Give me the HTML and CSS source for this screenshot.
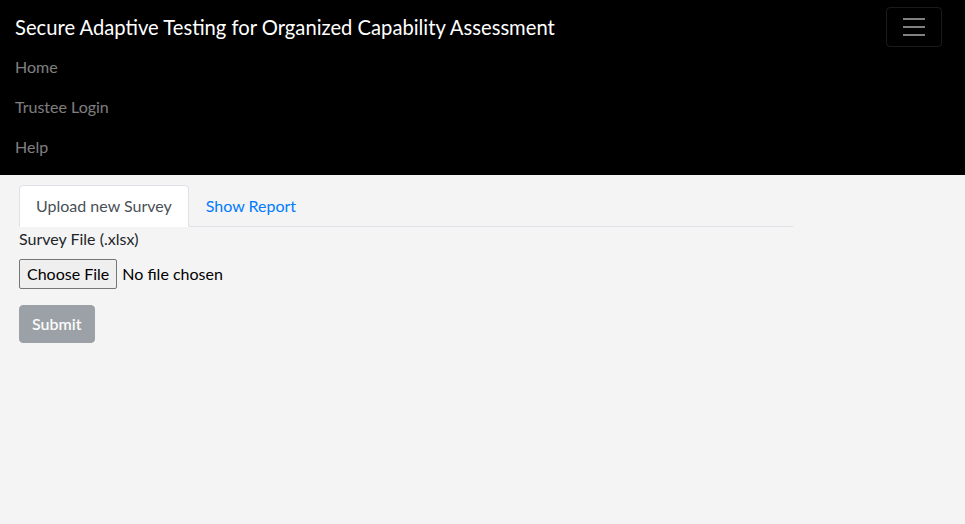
FILE: index.html
```html
<!DOCTYPE html>
<html lang="en">
<head>
<meta charset="utf-8">
<title>SATOCA</title>
<link rel="stylesheet" href="styles.css">
</head>
<body>
<nav class="navbar">
  <div class="navbar-top">
    <a class="brand" href="#">Secure Adaptive Testing for Organized Capability Assessment</a>
    <button class="toggler" type="button" aria-label="Toggle navigation">
      <svg width="30" height="30" viewBox="0 0 30 30"><path stroke="rgba(255,255,255,0.5)" stroke-width="2" stroke-linecap="butt" d="M4 7h22M4 15h22M4 23h22"/></svg>
    </button>
  </div>
  <ul class="nav-links">
    <li><a href="#">Home</a></li>
    <li><a href="#">Trustee Login</a></li>
    <li><a href="#">Help</a></li>
  </ul>
</nav>
<main class="content">
  <ul class="tabs">
    <li><a class="tab active" href="#">Upload new Survey</a></li>
    <li><a class="tab" href="#">Show Report</a></li>
  </ul>
  <form class="upload-form">
    <label class="field-label">Survey File (.xlsx)</label>
    <div class="file-row">
      <span class="file-btn">Choose File</span>
      <span class="file-name">No file chosen</span>
    </div>
    <button class="submit" type="button" disabled>Submit</button>
  </form>
</main>
</body>
</html>
```
FILE: styles.css
```css
* { box-sizing: border-box; }
html, body { margin: 0; padding: 0; }
body {
  background: #f4f4f4;
  font-family: "Lato", "Open Sans", sans-serif;
  font-size: 16px;
  line-height: 24px;
  color: #212529;
  height: 524px;
}
a { text-decoration: none; }
.navbar {
  background: #000;
  padding: 7px 23px 8px 15px;
}
.navbar-top {
  display: flex;
  justify-content: space-between;
  align-items: center;
}
.brand {
  color: #fff;
  font-size: 20.2px;
  line-height: 30px;
  padding: 5px 0;
}
.toggler {
  width: 56px;
  height: 40px;
  background: transparent;
  border: 1px solid rgba(255,255,255,0.1);
  border-radius: 4px;
  display: flex;
  align-items: center;
  justify-content: center;
  padding: 0;
}
.nav-links {
  list-style: none;
  margin: 0;
  padding: 0;
}
.nav-links a {
  display: block;
  color: rgba(255,255,255,0.5);
  padding: 8px 0;
}
.content {
  padding: 10px 0 0 19px;
  width: 793px;
}
.tabs {
  list-style: none;
  margin: 0;
  padding: 0;
  display: flex;
  border-bottom: 1px solid #dee2e6;
}
.tabs li { margin-bottom: -1px; }
.tab {
  display: block;
  padding: 8px 16px;
  border: 1px solid transparent;
  border-radius: 4px 4px 0 0;
  color: #007bff;
}
.tab.active {
  color: #495057;
  background: #fff;
  border-color: #dee2e6 #dee2e6 #fff;
}
.upload-form { display: flex; flex-direction: column; align-items: flex-start; }
.field-label { display: block; margin-bottom: 8px; }
.file-row { display: flex; align-items: center; height: 30px; }
.file-btn {
  display: inline-block;
  height: 30px;
  padding: 2px 7px;
  border: 1px solid #767676;
  border-radius: 2px;
  background: #efefef;
  color: #000;
  line-height: 24px;
  margin-right: 5px;
}
.file-name { color: #000; }
.submit {
  margin-top: 16px;
  font: inherit;
  line-height: 24px;
  padding: 6px 12px;
  border: 1px solid #6c757d;
  background: #6c757d;
  color: #fff;
  border-radius: 4px;
  opacity: 0.65;
  font-weight: 600;
}
```
